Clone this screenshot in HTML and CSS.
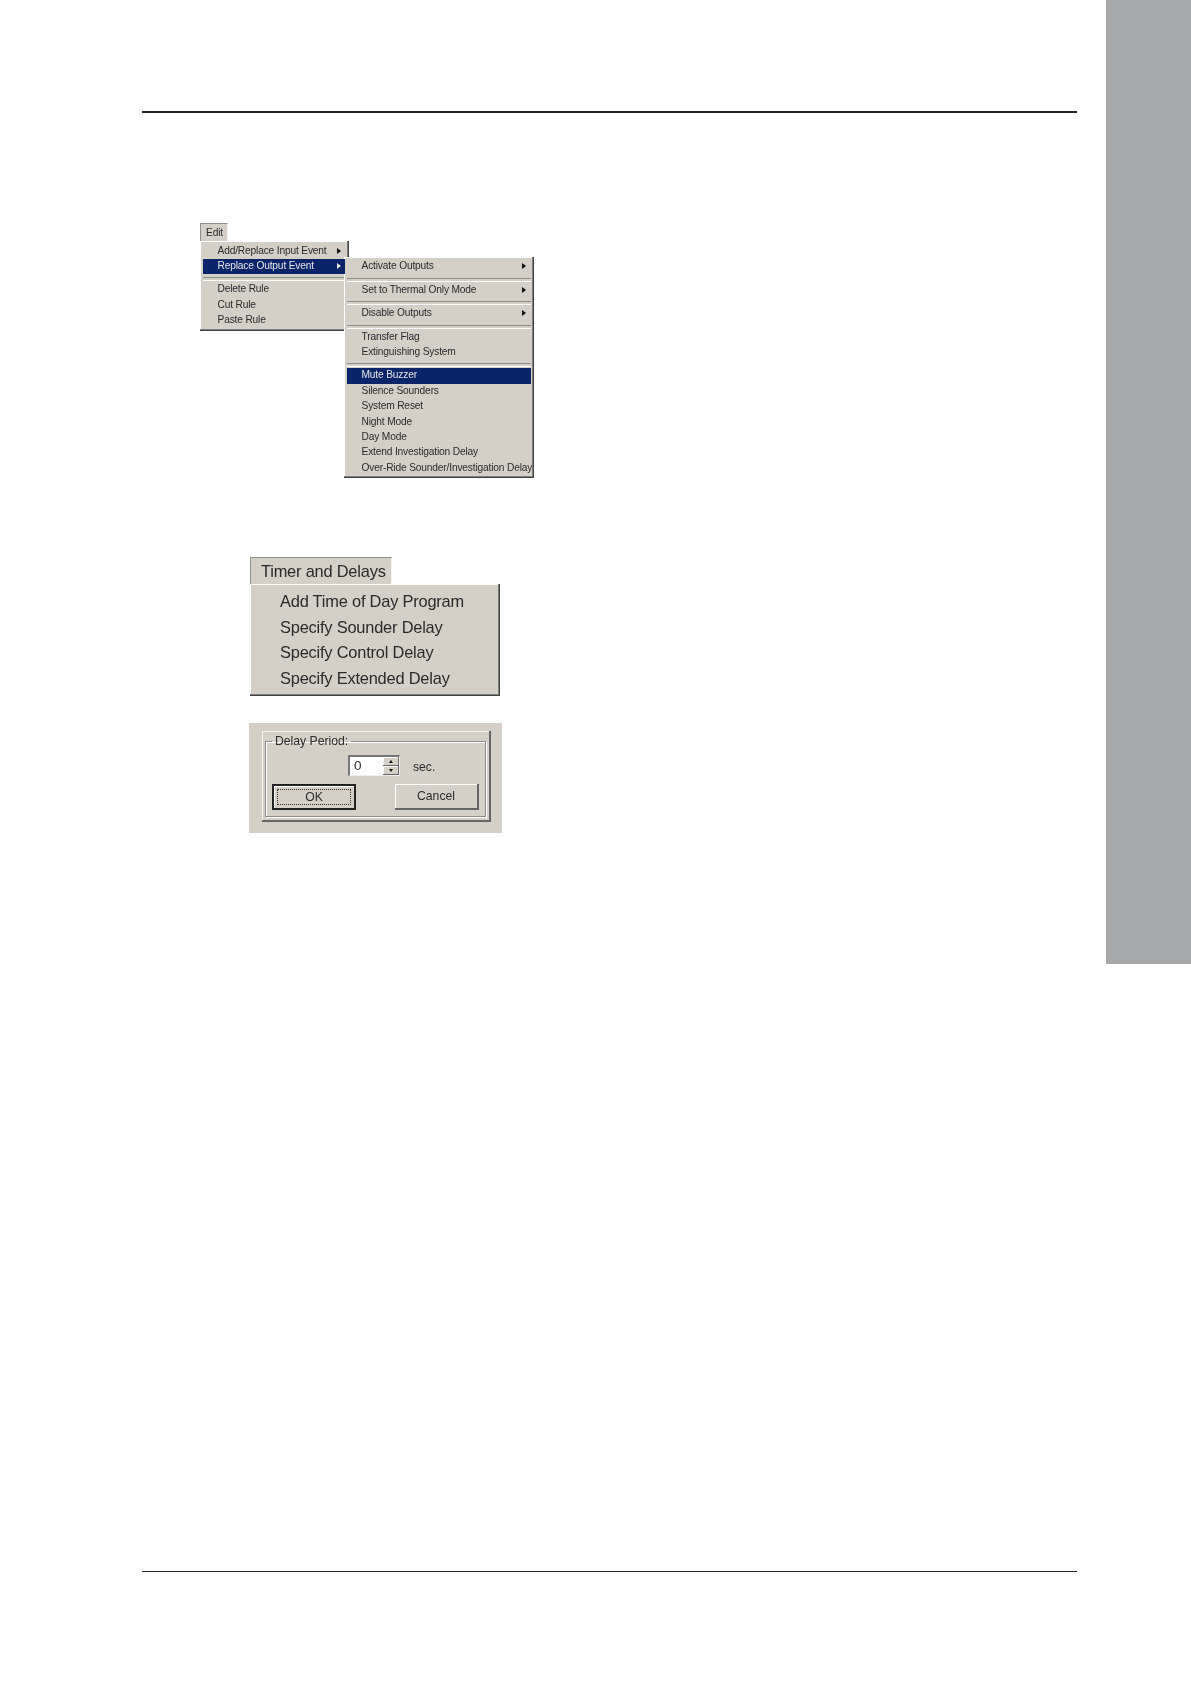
FILE: index.html
```html
<!DOCTYPE html>
<html lang="en">
<head>
    <meta charset="UTF-8">
    <title>Timer and Delays</title>
    <link rel="stylesheet" href="styles.css">
</head>
<body>
    <div class="page">
        <main class="content">
            <hr class="rule-top">

            <div class="edit-fig">
                <div class="menu-tab edit-tab">Edit</div>
                <div class="edit-menus">
                    <div class="menu edit-menu">
                        <div class="item">Add/Replace Input Event<i class="arrow"></i></div>
                        <div class="item active">Replace Output Event<i class="arrow"></i></div>
                        <div class="sep"></div>
                        <div class="item">Delete Rule</div>
                        <div class="item">Cut Rule</div>
                        <div class="item">Paste Rule</div>
                    </div>
                    <div class="menu sub-menu">
                        <div class="item">Activate Outputs<i class="arrow"></i></div>
                        <div class="sep"></div>
                        <div class="item">Set to Thermal Only Mode<i class="arrow"></i></div>
                        <div class="sep"></div>
                        <div class="item">Disable Outputs<i class="arrow"></i></div>
                        <div class="sep"></div>
                        <div class="item">Transfer Flag</div>
                        <div class="item">Extinguishing System</div>
                        <div class="sep"></div>
                        <div class="item active">Mute Buzzer</div>
                        <div class="item">Silence Sounders</div>
                        <div class="item">System Reset</div>
                        <div class="item">Night Mode</div>
                        <div class="item">Day Mode</div>
                        <div class="item">Extend Investigation Delay</div>
                        <div class="item">Over-Ride Sounder/Investigation Delay</div>
                    </div>
                </div>
            </div>

            <div class="timer-fig">
                <div class="menu-tab timer-tab">Timer and Delays</div>
                <div class="menu timer-menu">
                    <div class="item">Add Time of Day Program</div>
                    <div class="item">Specify Sounder Delay</div>
                    <div class="item">Specify Control Delay</div>
                    <div class="item">Specify Extended Delay</div>
                </div>
            </div>

            <div class="dialog">
                <div class="dialog-frame">
                    <fieldset class="group">
                        <legend>Delay Period:</legend>
                        <div class="field-row">
                            <div class="spin-input">
                                <span class="spin-value">0</span>
                                <div class="spin-btns">
                                    <div class="spin-btn"><i class="tri-up"></i></div>
                                    <div class="spin-btn"><i class="tri-down"></i></div>
                                </div>
                            </div>
                            <span class="unit">sec.</span>
                        </div>
                        <div class="btn-row">
                            <div class="btn btn-default"><span class="focus">OK</span></div>
                            <div class="btn">Cancel</div>
                        </div>
                    </fieldset>
                </div>
            </div>

            <hr class="rule-bottom">
        </main>
        <aside class="side-tab"></aside>
    </div>
</body>
</html>
```

FILE: styles.css
```css
* {
    box-sizing: border-box;
}
html, body {
    margin: 0;
    background: #fff;
}
.page {
    display: flex;
    align-items: flex-start;
    height: 1684px;
    overflow: hidden;
    font-family: "Liberation Sans", Arial, sans-serif;
    color: #2a2a2a;
}
.content {
    width: 1106px;
    padding: 111px 29px 0 142px;
}
.side-tab {
    width: 85px;
    height: 964px;
    background: #a7a8aa;
}
.rule-top {
    margin: 0;
    border: 0;
    height: 2px;
    background: #222;
}
.rule-bottom {
    margin: 738px 0 0;
    border: 0;
    height: 1px;
    background: #222;
}

/* menus */
.edit-fig,
.timer-fig,
.dialog {
    filter: blur(0.35px);
}
.menu-tab {
    background: #d4d0c8;
    border-top: 1px solid #8f8f8c;
    border-left: 1px solid #8f8f8c;
    border-right: 1px solid #f4f3ef;
    white-space: nowrap;
}
.menu {
    background: #d4d0c8;
    border-right: 1px solid #404040;
    border-bottom: 1px solid #404040;
    box-shadow: inset -1px -1px #808080, inset 1px 1px #fff;
}
.item {
    position: relative;
    white-space: nowrap;
}
.item.active {
    background: #0a246a;
    color: #e6e6e6;
}
.item.active .arrow {
    border-left-color: #e6e6e6;
}
.sep {
    height: 8px;
    padding-top: 3px;
}
.sep::before {
    content: "";
    display: block;
    height: 2px;
    border-top: 1px solid #8c8c88;
    border-bottom: 1px solid #fff;
}
.arrow {
    position: absolute;
    top: 4px;
    right: 4px;
    border-left: 4px solid #111;
    border-top: 3.5px solid transparent;
    border-bottom: 3.5px solid transparent;
}

/* edit figure */
.edit-fig {
    margin: 110px 0 0 58px;
    font-size: 10.2px;
    letter-spacing: -0.16px;
}
.edit-tab {
    width: 28px;
    height: 18px;
    line-height: 18px;
    padding-left: 5px;
}
.edit-menus {
    display: flex;
    align-items: flex-start;
}
.edit-menu {
    width: 149px;
    height: 90px;
    padding: 2.6px 3px;
}
.sub-menu {
    width: 190px;
    height: 221px;
    margin: 16px 0 0 -5px;
    padding: 2.4px 2px 0 3px;
}
.edit-menus .item {
    height: 15.4px;
    line-height: 14.6px;
    padding-left: 14.5px;
}
.sub-menu .arrow {
    right: 5px;
}

/* timer figure */
.timer-fig {
    margin: 79px 0 0 108px;
    font-size: 16.4px;
    letter-spacing: -0.2px;
}
.timer-tab {
    width: 142px;
    height: 27px;
    line-height: 27px;
    padding-left: 10px;
}
.timer-menu {
    width: 250px;
    height: 112px;
    padding: 5px 3px;
}
.timer-menu .item {
    height: 25.5px;
    line-height: 25.5px;
    padding-left: 27px;
}

/* delay dialog */
.dialog {
    width: 253px;
    height: 110px;
    margin: 27px 0 0 107px;
    padding: 8px 11px 11px 13px;
    background: #d4d0c8;
    font-size: 12.2px;
}
.dialog-frame {
    height: 91px;
    padding: 3px;
    border-right: 2px solid #666;
    border-bottom: 2px solid #666;
    box-shadow: inset 1px 1px #f4f3ef;
}
.group {
    margin: 0;
    height: 83px;
    padding: 7px 6px 6px;
    border: 1px solid #8c8c88;
    box-shadow: inset 1px 1px #fff, 1px 1px #fff;
}
.group legend {
    padding: 0 3px;
    line-height: 14px;
}
.field-row {
    display: flex;
    align-items: center;
    gap: 13px;
    margin-left: 76px;
    height: 21px;
}
.spin-input {
    display: flex;
    align-items: stretch;
    width: 52px;
    height: 21px;
    background: #fff;
    border-top: 2px solid #777;
    border-left: 2px solid #777;
    border-right: 1px solid #eee;
    border-bottom: 1px solid #eee;
}
.spin-value {
    flex: 1;
    padding-left: 4px;
    line-height: 18px;
    font-size: 13.5px;
}
.spin-btns {
    display: flex;
    flex-direction: column;
    width: 16px;
}
.spin-btn {
    flex: 1;
    display: flex;
    align-items: center;
    justify-content: center;
    background: #d4d0c8;
    border-right: 1px solid #666;
    border-bottom: 1px solid #666;
    box-shadow: inset 1px 1px #fff;
}
.tri-up {
    border-bottom: 3px solid #111;
    border-left: 2.5px solid transparent;
    border-right: 2.5px solid transparent;
}
.tri-down {
    border-top: 3px solid #111;
    border-left: 2.5px solid transparent;
    border-right: 2.5px solid transparent;
}
.unit {
    padding-top: 3px;
}
.btn-row {
    display: flex;
    justify-content: space-between;
    margin-top: 8px;
}
.btn {
    width: 84px;
    height: 26px;
    line-height: 25px;
    text-align: center;
    background: #d4d0c8;
    border-right: 2px solid #666;
    border-bottom: 2px solid #666;
    box-shadow: inset 1px 1px #fff;
}
.btn-default {
    padding: 3px;
    border: 2px solid #222;
    box-shadow: inset 1px 1px #fff;
}
.focus {
    display: block;
    height: 16px;
    line-height: 14px;
    border: 1px dotted #333;
}
```
